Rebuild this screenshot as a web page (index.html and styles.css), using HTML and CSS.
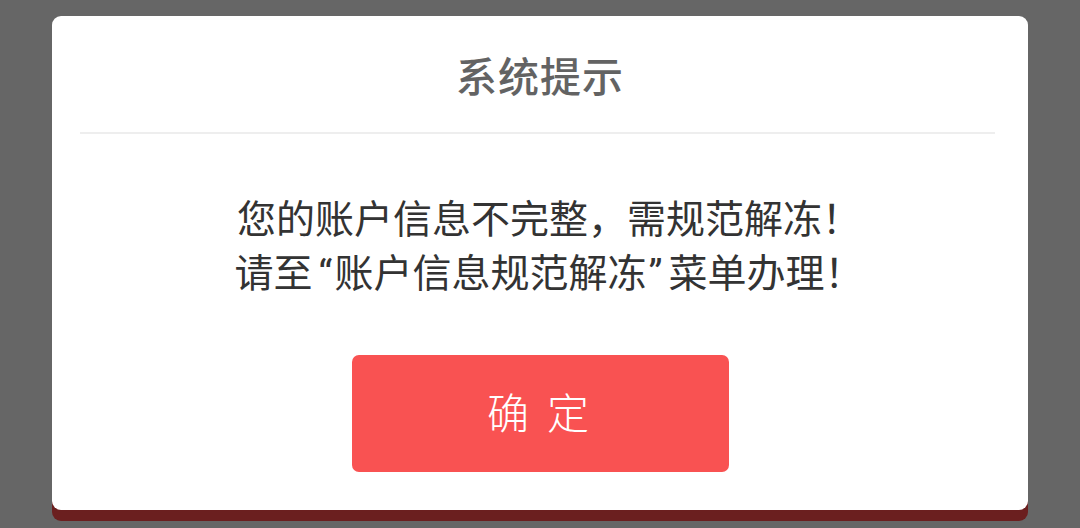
FILE: index.html
```html
<!DOCTYPE html>
<html lang="zh-CN">
<head>
<meta charset="utf-8">
<link rel="stylesheet" href="styles.css">
</head>
<body>
<div class="dialog">
  <div class="title">系统提示</div>
  <div class="divider"></div>
  <div class="message">
    <p>您的账户信息不完整，需规范解冻！</p>
    <p>请至<span class="ql">“</span>账户信息规范解冻<span class="qr">”</span>菜单办理！</p>
  </div>
  <div class="actions">
    <div class="btn">确 定</div>
  </div>
</div>
</body>
</html>
```
FILE: styles.css
```css
html, body {
  margin: 0;
  padding: 0;
  background: #666666;
  width: 1080px;
  height: 528px;
  overflow: hidden;
}
body {
  font-family: Roboto, "Noto Sans CJK SC", sans-serif;
  padding-top: 16px;
  box-sizing: border-box;
}
.dialog {
  margin-left: 52px;
  width: 976px;
  height: 494px;
  background: #ffffff;
  border-radius: 9px;
  box-shadow: 0 11px 0 #6b1f1f;
  display: flex;
  flex-direction: column;
  align-items: center;
}
.title {
  height: 116px;
  display: flex;
  align-items: center;
  justify-content: center;
  font-size: 41px;
  font-weight: 500;
  color: #636363;
  letter-spacing: 1px;
}
.divider {
  align-self: stretch;
  margin: 0 33px 0 28px;
  height: 2px;
  background: #eeeeee;
}
.message {
  margin-top: 59px;
  padding-left: 18px;
  text-align: center;
  color: #333333;
  font-size: 39px;
  line-height: 54px;
}
.message p {
  margin: 0;
}
.ql {
  margin-left: 6px;
  margin-right: 2px;
}
.qr {
  margin-left: 2px;
  margin-right: 6px;
}
.actions {
  margin-top: 54px;
}
.btn {
  width: 377px;
  height: 117px;
  border-radius: 7px;
  background: #f95252;
  color: #ffffff;
  font-size: 42px;
  font-weight: 300;
  display: flex;
  align-items: center;
  justify-content: center;
  letter-spacing: 4px;
  padding-bottom: 6px;
  box-sizing: border-box;
}
```
